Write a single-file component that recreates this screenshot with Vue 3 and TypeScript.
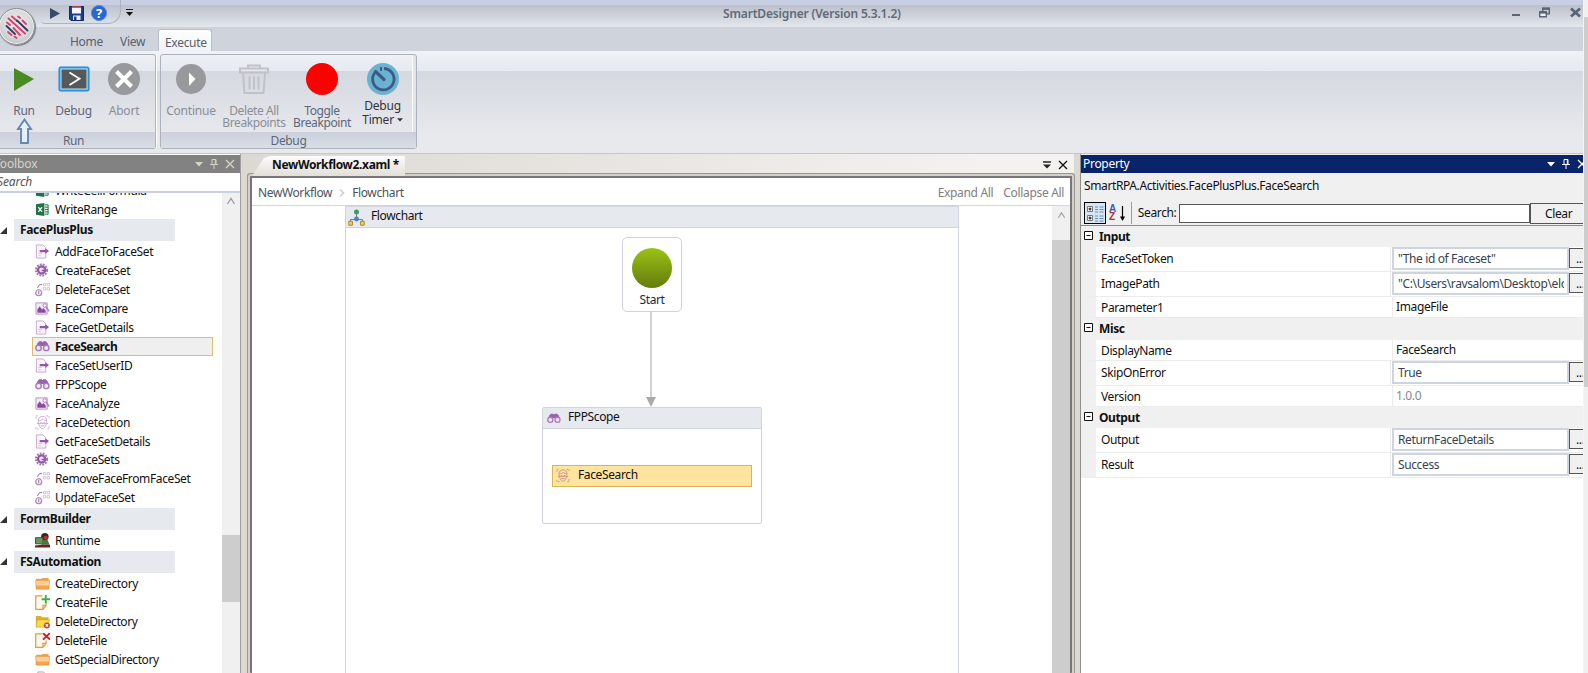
<template>
  <div class="screen">
    <!-- icônes partagées -->
    <svg class="sprite" aria-hidden="true">
      <symbol id="doc" viewBox="0 0 16 16">
        <path d="M1.500 1h7l3 3v11h-10z" fill="#fbf6fc" stroke="#c9a5d2" />
        <path d="M3.500 10h4M3.500 12.500h3" stroke="#d6bedd" />
        <path d="M5 6.500h6V4.500l4 3-4 3.200v-2H5z" fill="#9656a8" />
      </symbol>
      <symbol id="gear" viewBox="0 0 16 16">
        <circle cx="7" cy="7.500" r="6" fill="none" stroke="#a873b9" stroke-width="2" stroke-dasharray="2 1.200" />
        <circle cx="7" cy="7.500" r="3.800" fill="#eedff2" stroke="#9458a8" stroke-width="2.400" />
        <path d="M7 8h5" stroke="#9052a5" stroke-width="1.500" />
      </symbol>
      <symbol id="grid" viewBox="0 0 16 16">
        <circle cx="4" cy="11.500" r="3.200" fill="#f6eff8" stroke="#a77fb3" stroke-width="1.200" />
        <path d="M4 9.500v3.500M2.500 6.500l2-3.500 3-.5" stroke="#99699f" fill="none" />
        <path d="M9 1.500h2.500V4H9zM13 1.500h2.500V4H13zM9 6h2.500v2.500H9zM13 6h2.500v2.500H13z" fill="none" stroke="#cdbbd4" stroke-width=".9" />
      </symbol>
      <symbol id="image" viewBox="0 0 16 16">
        <path d="M1 2h12v12H1z" fill="#f4eaf7" stroke="#b890c5" />
        <path d="M2.500 12.500V9l2.500-3.500L7.500 9 9 7.500l2.500 3v2z" fill="#8a4b9f" />
        <circle cx="10.500" cy="4.800" r="1.900" fill="#fff" stroke="#a878b7" />
        <path d="M12 6.500l3 4.500" stroke="#a878b7" stroke-width="1.400" />
      </symbol>
      <symbol id="binoculars" viewBox="0 0 16 16">
        <path d="M2.500 4.500L4.500 2.500h2.500l1 1 1-1h2.500l2 2 1.500 5H9.500V7.500h-3v2H1z" fill="#9762ab" />
        <circle cx="3.800" cy="9.500" r="2.900" fill="#f1e5f4" stroke="#a97abb" stroke-width="1.500" />
        <circle cx="12" cy="9.500" r="2.900" fill="#f1e5f4" stroke="#a97abb" stroke-width="1.500" />
      </symbol>
      <symbol id="face" viewBox="0 0 16 16">
        <path d="M1 4V1h3M12 1h3v3M15 12v3h-3M4 15H1v-3" fill="none" stroke="currentColor" stroke-dasharray="2 1" />
        <path d="M3.500 6.500C3.500 3 5.500 1.500 8 1.500s4.500 1.500 4.500 5-2 8-4.500 8-4.500-4.500-4.500-8z" fill="none" stroke="currentColor" />
        <path d="M3.500 6c2.500 0 4-.5 5-2 1 1.500 2 2 4 2M2 9h12M5.500 8h1.500M9 8h1.500M6 11.500h4" fill="none" stroke="currentColor" />
      </symbol>
      <symbol id="excel" viewBox="0 0 16 16">
        <path d="M1 2.500l9-1.500v14l-9-1.500z" fill="#1f7246" />
        <path d="M3.500 5.500l4 5M7.500 5.500l-4 5" stroke="#fff" stroke-width="1.400" />
        <path d="M10.500 3h3.500v10h-3.500" fill="#e4f1e9" stroke="#1f7246" />
        <path d="M10.500 5.500H14M10.500 8H14M10.500 10.500H14" stroke="#1f7246" />
      </symbol>
      <symbol id="runtime" viewBox="0 0 16 16">
        <circle cx="10.500" cy="4" r="4" fill="#2d2a24" />
        <circle cx="11.500" cy="5" r="2.200" fill="#d22730" />
        <path d="M.5 5h8v6.500h-8z" fill="#6b9a5d" stroke="#31512f" />
        <path d="M7.500 7.500l6 0 2 5H7z" fill="#4a7642" />
        <path d="M0 15.500v-2.300l7-.7h9v3z" fill="#6c2024" />
      </symbol>
      <symbol id="folder" viewBox="0 0 16 16">
        <path d="M1 3h5.500L8 2h6.500v11H1z" fill="#e9a862" />
        <path d="M.8 4.500h14.700l-.8 9.500H1.300z" fill="#f5a54b" stroke="#dd8a37" stroke-width=".6" />
        <path d="M1.200 5h14l-.4 5H1.500z" fill="#fbcf98" />
      </symbol>
      <symbol id="folder-delete" viewBox="0 0 16 16">
        <path d="M1 2h5l1.500 1.500h7v10H1z" fill="#dcb02c" />
        <path d="M2.500 6h13l-2 8H1z" fill="#f7d94b" stroke="#c99d23" stroke-width=".6" />
        <circle cx="12.700" cy="12.200" r="3.200" fill="#c1423f" />
        <path d="M11.400 10.900l2.600 2.600M14 10.900l-2.600 2.600" stroke="#fff" stroke-width="1.100" />
      </symbol>
      <symbol id="file-add" viewBox="0 0 16 16">
        <path d="M8 1H.8v14.300h7.700l3.300-4V9M8.500 15v-4H12" fill="#fffaf0" stroke="#e79a37" stroke-width="1.300" />
        <path d="M11.500 0v9M7 4.500h9" stroke="#36b24a" stroke-width="2" />
      </symbol>
      <symbol id="file-delete" viewBox="0 0 16 16">
        <path d="M7.500 1H.8v14.300h7.700l3.300-4V8M8.500 15v-4H12" fill="#fffaf0" stroke="#e79a37" stroke-width="1.300" />
        <path d="M8.500 0l7.500 7M16 0L8.500 7" stroke="#e2131b" stroke-width="2" />
      </symbol>
      <symbol id="file" viewBox="0 0 16 16">
        <path d="M3 1h6l4 4v10H3z" fill="#f5f5f5" stroke="#aaa" />
      </symbol>
      <symbol id="pin" viewBox="0 0 10 12">
        <path d="M3 1.500h4v5H3zM1 6.500h8M5 6.500V11M6.300 1.500v5" fill="none" stroke="currentColor" />
      </symbol>
      <symbol id="cross" viewBox="0 0 10 10">
        <path d="M1 1l8 8M9 1L1 9" fill="none" stroke="currentColor" stroke-width="1.300" />
      </symbol>
      <symbol id="caret" viewBox="0 0 8 5">
        <path d="M0 0h8L4 4.500z" fill="currentColor" />
      </symbol>
      <symbol id="chevron" viewBox="0 0 10 10">
        <path d="M1.500 8L5 2.500 8.500 8" fill="none" stroke="#9d9d9d" stroke-width="1.300" />
      </symbol>
    </svg>

    <div class="app">
      <header class="titlebar">
        <div class="quick">
          <svg width="10" height="11" viewBox="0 0 10 11"><path d="M0 0l10 5.500L0 11z" fill="#3c4a6b" /></svg>
          <svg class="q-save" width="15" height="15" viewBox="0 0 15 15">
            <path d="M.5.5h14v14H2L.5 13z" fill="#1d3f87" stroke="#132a5e" />
            <path d="M3 1h9v6.500H3z" fill="#f2f5fa" /><path d="M3 0h9v1.800H3z" fill="#a4444c" />
            <path d="M4 9.500h7.500V14H4z" fill="#e8edf5" /><path d="M5 10.500h2.500V14H5z" fill="#1d3f87" />
          </svg>
          <svg class="q-help" width="16" height="16" viewBox="0 0 16 16">
            <circle cx="8" cy="8" r="7.600" fill="#2767d2" stroke="#5b8ade" />
            <text x="8" y="12.800" text-anchor="middle" fill="#fff" font-size="13" font-weight="700">?</text>
          </svg>
        </div>
        <svg class="q-more" width="7" height="8" viewBox="0 0 7 8"><path d="M0 .5h7" stroke="#222" /><path d="M0 3h7L3.500 7z" fill="#111" /></svg>
        <div class="title">SmartDesigner (Version 5.3.1.2)</div>
        <div class="win">
          <svg width="8" height="12" viewBox="0 0 8 12"><path d="M0 8h8" stroke="#5a6477" stroke-width="2" /></svg>
          <svg width="11" height="12" viewBox="0 0 11 12">
            <path d="M3.700 5V1.700h6.600v5H8" fill="none" stroke="#5a6477" stroke-width="1.400" /><path d="M3 1.500h8" stroke="#5a6477" stroke-width="2.400" />
            <path d="M.7 5h6.600v4.800H.7z" fill="#eef0f4" stroke="#5a6477" stroke-width="1.400" /><path d="M0 5.500h8" stroke="#5a6477" stroke-width="2.200" />
          </svg>
          <svg width="11" height="12" viewBox="0 0 11 12"><path d="M1 1.500l9 8M10 1.500l-9 8" stroke="#5a6477" stroke-width="2.700" /></svg>
        </div>
      </header>
      <div class="orb">
        <svg width="24" height="24" viewBox="0 0 24 24" fill="none" stroke-width="1.900" stroke-linecap="round">
          <path d="M13 1.500l2 1.500M17.500 5.500l3.500 3.500M7 1.500l5 4.500M3.500 3.500l16.500 15M2 7.500l3 2.500M8.500 13l6.500 7M3 17l3.500 3M9.500 21.500l2 1.500" stroke="#dc3f6b" />
          <path d="M12 5.500l10.500 10M1.500 11l8.500 8" stroke="#2e4159" />
        </svg>
      </div>

      <nav class="tabs">
        <span class="tab t-home">Home</span>
        <span class="tab t-view">View</span>
        <span class="tab active">Execute</span>
      </nav>

      <section class="ribbon">
        <div class="group g-run">
          <div class="buttons">
            <div class="btn" style="width: 48px">
              <svg width="32" height="32" viewBox="0 0 32 32"><path d="M6 5l20 11L6 28z" fill="#4a8a22" /></svg>
              <span>Run</span>
            </div>
            <div class="btn" style="width: 51px">
              <svg width="32" height="32" viewBox="0 0 32 32">
                <rect x="1" y="4" width="30" height="24" rx="1.500" fill="#37a0e4" stroke="#2384cc" />
                <rect x="3" y="6" width="26" height="20" fill="#56595c" stroke="#bfe3f7" />
                <path d="M11.500 9.500l10 6.300-10 6.200" fill="none" stroke="#fff" stroke-width="1.800" />
              </svg>
              <span>Debug</span>
            </div>
            <div class="btn off" style="width: 50px">
              <svg width="32" height="32" viewBox="0 0 32 32"><circle cx="16" cy="16" r="16" fill="#97999d" /><path d="M8.500 8.500l15 15M23.500 8.500l-15 15" stroke="#fff" stroke-width="4" /></svg>
              <span>Abort</span>
            </div>
          </div>
          <div class="caption">Run</div>
          <svg class="pointer" width="17" height="27" viewBox="0 0 17 27"><path d="M8.500 1.500l6.500 9.500h-3v14H5v-14H2z" fill="#e9edf4" stroke="#6488b5" stroke-width="1.900" /></svg>
        </div>
        <div class="group g-debug">
          <div class="buttons">
            <div class="btn off" style="width: 60px">
              <svg width="32" height="32" viewBox="0 0 32 32"><circle cx="16" cy="16" r="15" fill="#97999d" /><path d="M14 9.500l6.500 6.500-6.500 7z" fill="#fff" /></svg>
              <span>Continue</span>
            </div>
            <div class="btn off" style="width: 66px">
              <svg width="32" height="32" viewBox="0 0 32 32" fill="none" stroke="#c0c2c6" stroke-width="2">
                <path d="M2 5.500h28v4H2zM10 5V2.500h12V5M5 10l1.500 20h19L27 10M11.500 13.500v13M16 13.500v13M20.500 13.500v13" />
              </svg>
              <span>Delete All<br>Breakpoints</span>
            </div>
            <div class="btn" style="width: 70px">
              <svg width="32" height="32" viewBox="0 0 32 32"><circle cx="16" cy="16" r="16" fill="#fe0000" /></svg>
              <span>Toggle<br>Breakpoint</span>
            </div>
            <div class="btn timer" style="width: 51px">
              <svg width="32" height="32" viewBox="0 0 32 32" fill="none">
                <circle cx="16" cy="16" r="16" fill="#69b3d1" />
                <path d="M17 5.500a10.700 10.700 0 1 1-9 4" stroke="#3c5b84" stroke-width="2.800" />
                <path d="M8.500 8.500l8.500 8" stroke="#3c5b84" stroke-width="3.200" stroke-linecap="round" /><path d="M14 4v4" stroke="#3c5b84" stroke-width="2" />
              </svg>
              <span>Debug<br>Timer <svg class="mini" width="6" height="4"><use href="#caret" /></svg></span>
            </div>
          </div>
          <div class="caption">Debug</div>
        </div>
      </section>

      <main class="work">
        <aside class="toolbox">
          <div class="bar bar-grey">
            <span class="cut">Toolbox</span>
            <svg width="8" height="5"><use href="#caret" /></svg>
            <svg width="10" height="12"><use href="#pin" /></svg>
            <svg width="10" height="10"><use href="#cross" /></svg>
          </div>
          <div class="filter"><span>Search</span></div>
          <div class="list-wrap">
            <div class="list">
              <template v-for="g in groups" :key="g.name">
                <div v-if="g.name" class="cat">
                  <svg width="7" height="7" viewBox="0 0 7 7"><path d="M7 0v7H0z" fill="#333" /></svg>
                  <b>{{ g.name }}</b>
                </div>
                <div class="items" :class="{ first: !g.name }">
                  <div v-for="it in g.items" :key="it.label" class="item" :class="{ selected: it.label === selected }">
                    <svg width="15" height="15"><use :href="'#' + it.icon" /></svg>
                    <span>{{ it.label }}</span>
                  </div>
                </div>
              </template>
            </div>
            <div class="scroll s-left">
              <svg width="10" height="10"><use href="#chevron" /></svg>
              <i class="thumb"></i>
            </div>
          </div>
        </aside>

        <section class="editor">
          <div class="doc-tabs">
            <div class="doc-tab">NewWorkflow2.xaml *</div>
            <svg width="8" height="8" viewBox="0 0 8 8"><path d="M0 1h8" stroke="#222" stroke-width="1.500" /><path d="M0 3.500h8L4 7.500z" fill="#222" /></svg>
            <svg width="10" height="10"><use href="#cross" /></svg>
          </div>
          <div class="frame">
            <div class="crumbs">
              <span>NewWorkflow</span>
              <svg width="6" height="8" viewBox="0 0 6 8"><path d="M1 .5L4.500 4 1 7.500" fill="none" stroke="#ccd0d8" stroke-width="1.700" /></svg>
              <span>Flowchart</span>
              <span class="links"><span>Expand All</span><span>Collapse All</span></span>
            </div>
            <div class="canvas-row">
              <div class="canvas">
                <div class="flow-head">
                  <svg width="17" height="17" viewBox="0 0 17 17">
                    <path d="M8.500 4v6M2.500 12v-1.500h12V12" fill="none" stroke="#6a7ea0" />
                    <circle cx="8.500" cy="3" r="2.500" fill="#3d9b64" /><circle cx="8.500" cy="10" r="2.400" fill="#4e7fc0" />
                    <path d="M.8 12.300h3.600v3.900H.8zM12.600 12.300h3.600v3.900h-3.600z" fill="#f4d465" stroke="#a98628" />
                  </svg>
                  <span>Flowchart</span>
                </div>
                <div class="node start"><i></i>Start</div>
                <svg class="arrow" width="10" height="95" viewBox="0 0 10 95"><path d="M5 0v86" stroke="#cfd1d6" stroke-width="2" /><path d="M0 85h10L5 95z" fill="#aaa" /></svg>
                <div class="node scope">
                  <div class="scope-head">
                    <svg width="14" height="15"><use href="#binoculars" /></svg>
                    <span>FPPScope</span>
                  </div>
                  <div class="step">
                    <svg width="14" height="17" viewBox="0 0 14 17"><use href="#face" width="14" height="17" /></svg>
                    <span>FaceSearch</span>
                  </div>
                </div>
              </div>
              <div class="scroll s-mid">
                <svg width="9" height="10"><use href="#chevron" /></svg>
                <i class="thumb"></i>
              </div>
            </div>
          </div>
        </section>

        <aside class="props">
          <div class="bar bar-blue">
            <span class="cut">Property</span>
            <svg width="8" height="5"><use href="#caret" /></svg>
            <svg width="10" height="12"><use href="#pin" /></svg>
            <svg width="10" height="10"><use href="#cross" /></svg>
          </div>
          <div class="type">SmartRPA.Activities.FacePlusPlus.FaceSearch</div>
          <div class="tools">
            <span class="sort-cat">
              <svg width="17" height="17" viewBox="0 0 17 17">
                <path d="M.5 1.500h5v5h-5zM.5 10.500h5v5h-5z" fill="#fff" stroke="#777" />
                <path d="M1.500 4h3M3 2.500v3M1.500 13h3M3 11.500v3" stroke="#000" />
                <path d="M8 2h3M12.500 2h4M8 4.500h3M12.500 4.500h4M8 7h3M12.500 7h4M8 11h3M12.500 11h4M8 13.500h3M12.500 13.500h4M8 16h3M12.500 16h4" stroke="#6d8cb5" />
              </svg>
            </span>
            <span class="az"><b>A</b><b>Z</b></span>
            <svg class="down" width="5" height="15" viewBox="0 0 5 15"><path d="M2.500 0v11" stroke="#000" stroke-width="1.200" /><path d="M0 10.500h5L2.500 15z" /></svg>
            <i class="sep"></i>
            <span>Search:</span>
            <div class="search-box"></div>
            <div class="clear">Clear</div>
          </div>
          <div class="grid">
            <template v-for="s in sections" :key="s.title">
              <div class="sec">
                <svg width="9" height="9" viewBox="0 0 9 9"><path d="M.5.500h8v8h-8z" fill="#fff" stroke="#111" /><path d="M2.500 4.500h4" stroke="#111" /></svg>
                <b>{{ s.title }}</b>
              </div>
              <div v-for="r in s.rows" :key="r.name" class="row" :class="{ tall: r.editor }">
                <div class="name">{{ r.name }}</div>
                <div v-if="r.editor" class="value">
                  <div class="field"><span>{{ r.value }}</span></div>
                  <div class="more">...</div>
                </div>
                <div v-else class="value plain" :class="{ dim: r.dim }">{{ r.value }}</div>
              </div>
            </template>
          </div>
        </aside>
      </main>
    </div>
    <div class="page-scroll"><i></i></div>
  </div>
</template>

<script setup lang="ts">
import { ref } from 'vue';

interface Item {
  label: string;
  icon: string;
}
interface Group {
  name: string;
  items: Item[];
}
interface Row {
  name: string;
  value: string;
  editor?: boolean;
  dim?: boolean;
}

const selected = ref('FaceSearch');

const groups: Group[] = [
  {
    name: '',
    items: [
      { label: 'WriteCellFormula', icon: 'excel' },
      { label: 'WriteRange', icon: 'excel' },
    ],
  },
  {
    name: 'FacePlusPlus',
    items: [
      { label: 'AddFaceToFaceSet', icon: 'doc' },
      { label: 'CreateFaceSet', icon: 'gear' },
      { label: 'DeleteFaceSet', icon: 'grid' },
      { label: 'FaceCompare', icon: 'image' },
      { label: 'FaceGetDetails', icon: 'doc' },
      { label: 'FaceSearch', icon: 'binoculars' },
      { label: 'FaceSetUserID', icon: 'doc' },
      { label: 'FPPScope', icon: 'binoculars' },
      { label: 'FaceAnalyze', icon: 'image' },
      { label: 'FaceDetection', icon: 'face' },
      { label: 'GetFaceSetDetails', icon: 'doc' },
      { label: 'GetFaceSets', icon: 'gear' },
      { label: 'RemoveFaceFromFaceSet', icon: 'grid' },
      { label: 'UpdateFaceSet', icon: 'grid' },
    ],
  },
  { name: 'FormBuilder', items: [{ label: 'Runtime', icon: 'runtime' }] },
  {
    name: 'FSAutomation',
    items: [
      { label: 'CreateDirectory', icon: 'folder' },
      { label: 'CreateFile', icon: 'file-add' },
      { label: 'DeleteDirectory', icon: 'folder-delete' },
      { label: 'DeleteFile', icon: 'file-delete' },
      { label: 'GetSpecialDirectory', icon: 'folder' },
      { label: '', icon: 'file' },
    ],
  },
];

const sections: { title: string; rows: Row[] }[] = [
  {
    title: 'Input',
    rows: [
      { name: 'FaceSetToken', value: '"The id of Faceset"', editor: true },
      { name: 'ImagePath', value: '"C:\\Users\\ravsalom\\Desktop\\elon', editor: true },
      { name: 'Parameter1', value: 'ImageFile' },
    ],
  },
  {
    title: 'Misc',
    rows: [
      { name: 'DisplayName', value: 'FaceSearch' },
      { name: 'SkipOnError', value: 'True', editor: true },
      { name: 'Version', value: '1.0.0', dim: true },
    ],
  },
  {
    title: 'Output',
    rows: [
      { name: 'Output', value: 'ReturnFaceDetails', editor: true },
      { name: 'Result', value: 'Success', editor: true },
    ],
  },
];
</script>

<style>
body {
  overflow: hidden;
}
</style>

<style scoped>
.screen, .screen * {
  box-sizing: border-box;
}
.screen {
  display: flex;
  width: 1588px;
  height: 673px;
  overflow: hidden;
  font: 12px/16px "Noto Sans", "Open Sans", sans-serif;
  letter-spacing: -0.38px;
  color: #111;
  white-space: nowrap;
}
.screen svg {
  display: block;
  flex: none;
}
.screen .sprite {
  position: absolute;
  width: 0;
  height: 0;
}
.app {
  position: relative;
  display: flex;
  flex-direction: column;
  width: 1583px;
  height: 673px;
  overflow: hidden;
}
.page-scroll {
  width: 5px;
  padding-top: 17px;
  background: #f0f0f0;
  border-left: 1px solid #f4f4f4;
}
.page-scroll i {
  display: block;
  height: 370px;
  background: #cdcdcd;
}

/* barre de titre */
.titlebar {
  display: flex;
  height: 27px;
  background: linear-gradient(#c8cfe3 0 5px, #bbc0ca 5px, #e3e7ee);
}
.quick {
  display: flex;
  align-items: center;
  width: 80px;
  height: 24px;
  margin-left: 41px;
  padding: 3px 0 0 9px;
  border: 1px solid #adb2bb;
  border-width: 0 1px 1px 0;
  border-radius: 0 0 13px 4px;
}
.q-save {
  margin-left: 9px;
}
.q-help {
  margin-left: 7px;
}
.q-more {
  margin: 9px 0 0 5px;
}
.title {
  flex: 1;
  padding: 6px 0 0 590px;
  font-weight: 600;
  color: #626a79;
  letter-spacing: -0.17px;
}
.win {
  display: flex;
  gap: 19px;
  padding: 7px 2px 0 0;
}
.win svg + svg + svg {
  margin-left: 1px;
}
.orb {
  position: absolute;
  left: -2px;
  top: 8px;
  display: flex;
  align-items: center;
  justify-content: center;
  width: 37px;
  height: 37px;
  border: 1px solid #8a8e92;
  border-radius: 50%;
  background: radial-gradient(circle at 50% 40%, #ececec, #d4d7d9 55%, #aeb3b7);
  box-shadow: inset 0 0 0 1px #eceeef, 1px 1px 1px #777;
}

/* onglets et ruban */
.tabs {
  display: flex;
  height: 24px;
  background: #cfd3dc;
  color: #5a5f6a;
}
.tab {
  padding-top: 7px;
  letter-spacing: -0.3px;
}
.t-home {
  margin-left: 70px;
  width: 50px;
}
.t-view {
  width: 38px;
}
.tab.active {
  width: 54px;
  margin-top: 2px;
  padding: 5px 0 0 6px;
  background: linear-gradient(#fff, #f0f3f8);
  border: 1px solid #b9bec9;
  border-bottom: 0;
  border-radius: 3px 3px 0 0;
}
.ribbon {
  display: flex;
  gap: 4px;
  height: 103px;
  padding: 3px 0 4px;
  background: linear-gradient(#eff2f7 0, #e6eaf0 20px, #d4d8e0 20px, #e7e9ec 85px);
  border-bottom: 1px solid #c0c6d2;
}
.group {
  position: relative;
  display: flex;
  flex-direction: column;
  border: 1px solid #abb1bd;
  border-radius: 3px;
  box-shadow: 1px 0 #fff;
}
.g-run {
  width: 156px;
  border-left: 0;
  border-radius: 0 3px 3px 0;
}
.g-debug {
  width: 257px;
  box-shadow: inset -3px 0 #e1e4ea, inset -4px 0 #fff;
}
.buttons {
  display: flex;
  flex: 1;
  padding-top: 8px;
}
.btn {
  display: flex;
  flex-direction: column;
  align-items: center;
  text-align: center;
  color: #60667a;
}
.btn span {
  margin-top: 7px;
  line-height: 12px;
  letter-spacing: -0.2px;
}
.btn svg + span {
  padding-top: 3px;
}
.btn.off {
  color: #8b8e95;
}
.btn.off span, .btn:nth-child(3) span {
  letter-spacing: -0.4px;
}
.btn.off:first-child span, .g-run .btn.off span {
  letter-spacing: -0.2px;
}
.btn.timer {
  color: #33343a;
}
.timer svg + span {
  margin-top: 1px;
  line-height: 14px;
}
.timer .mini {
  display: inline-block;
  vertical-align: 2px;
}
.caption {
  height: 16px;
  line-height: 17px;
  text-align: center;
  color: #60667a;
  background: linear-gradient(#cbd0dc, #dadde5);
}
.g-run .caption {
  padding-right: 8px;
}
.pointer {
  position: absolute;
  left: 16px;
  top: 63px;
}

/* zone de travail */
.work {
  display: flex;
  flex: 1;
  min-height: 0;
  background: #dcd9d2;
}
.bar {
  display: flex;
  align-items: center;
  height: 18px;
}
.bar .cut {
  flex: 1;
}
.toolbox {
  display: flex;
  flex-direction: column;
  width: 241px;
  padding-top: 1px;
  background: #fff;
  border-right: 1px solid #a0a0a0;
}
.bar-grey {
  gap: 6px;
  padding-right: 5px;
  background: #828282;
  color: #d8d4c4;
}
.bar-grey .cut {
  margin-left: -6px;
  letter-spacing: -0.1px;
}
.filter {
  height: 20px;
  padding-top: 1px;
  border-bottom: 2px solid #c6d2e2;
  font-style: italic;
  color: #555;
}
.filter span {
  margin-left: -3px;
  letter-spacing: -0.1px;
}
.list-wrap {
  display: flex;
  flex: 1;
  min-height: 0;
}
.list {
  flex: 1;
  overflow: hidden;
}
.cat {
  display: flex;
  align-items: center;
  height: 21.500px;
}
.cat b {
  width: 161px;
  height: 21.500px;
  margin-left: 7px;
  padding-left: 6px;
  line-height: 22px;
  letter-spacing: -0.33px;
  background: #e6eaee;
}
.items {
  padding-top: 2.500px;
  padding-left: 32px;
}
.items.first {
  margin-top: -14px;
}
.item {
  display: flex;
  align-items: center;
  height: 18.930px;
  gap: 5px;
  padding-left: 2px;
  border: 1px solid transparent;
  width: 181px;
}
.items:not(.first) .item {
  position: relative;
  top: -1px;
}
.item span {
  padding-top: 1px;
}
.item.selected {
  background: #efefef;
  border-color: #dcc069;
  font-weight: 700;
  letter-spacing: -0.5px;
}
.scroll {
  display: flex;
  flex-direction: column;
  align-items: center;
  width: 17px;
  background: #f0f0f0;
}
.thumb {
  display: block;
  width: 100%;
  background: #cdcdcd;
}
.s-left {
  width: 18px;
  padding-top: 3px;
}
.s-left .thumb {
  height: 67px;
  margin-top: 329px;
}

.editor {
  display: flex;
  flex-direction: column;
  width: 833px;
  padding-left: 6px;
  background: linear-gradient(90deg, #dcd9d2, #f3f2f1 90%);
}
.doc-tabs {
  display: flex;
  align-items: center;
  height: 22px;
  gap: 7px;
  padding-right: 6px;
}
.doc-tab {
  width: 153px;
  height: 20px;
  margin: 2px auto 0 5px;
  padding: 1px 0 0 20px;
  font-weight: 700;
  letter-spacing: -0.35px;
  background: linear-gradient(#fcfcfb, #e2dfd9);
  clip-path: polygon(0 100%, 12px 10%, 18px 0, 100% 0, 100% 100%);
}
.frame {
  display: flex;
  flex-direction: column;
  flex: 1;
  min-height: 0;
  border: solid #77757a;
  border-width: 2px 2px 0 2px;
  margin-right: 2px;
  margin-left: 3px;
  box-shadow: 0 0 0 2px #d3d0ca, 0 0 0 3px #99968f;
  border-radius: 1px;
  background: #fff;
}
.crumbs {
  display: flex;
  align-items: center;
  height: 28px;
  gap: 7px;
  padding: 2px 6px 0 6px;
  border-bottom: 1px solid #d2d6df;
  color: #4b5264;
}
.links {
  display: flex;
  gap: 10px;
  margin-left: auto;
  color: #808080;
  letter-spacing: -0.33px;
}
.canvas-row {
  display: flex;
  flex: 1;
  min-height: 0;
}
.canvas {
  position: relative;
  width: 614px;
  margin-left: 93px;
  border: 1px solid #d0d5e0;
  border-bottom: 0;
}
.flow-head {
  display: flex;
  height: 21px;
  gap: 6px;
  padding: 1px 0 0 2px;
  background: #e6eaee;
  border-bottom: 1px solid #d0d5e0;
}
.flow-head svg {
  margin-top: 1px;
}
.node {
  position: absolute;
  border: 1px solid #d0d3de;
  background: #fff;
}
.start {
  left: 276px;
  top: 30px;
  width: 60px;
  height: 75px;
  padding-top: 10px;
  border-radius: 5px;
  text-align: center;
  color: #222c3f;
}
.start i {
  display: block;
  width: 40px;
  height: 40px;
  margin: 0 auto 4px;
  border-radius: 50%;
  background: linear-gradient(#9ac215, #8bad12 30%, #6d8a0d 80%, #64800b);
}
.arrow {
  position: absolute;
  left: 300px;
  top: 105px;
}
.scope {
  left: 196px;
  top: 200px;
  width: 220px;
  height: 117px;
  border-radius: 2px;
}
.scope-head {
  display: flex;
  height: 21px;
  gap: 7px;
  padding: 1px 0 0 4px;
  background: #e6eaee;
  border-bottom: 1px solid #d0d5e0;
}
.scope-head svg {
  margin-top: 2px;
}
.step {
  display: flex;
  width: 200px;
  height: 22px;
  margin: 36px auto 0;
  gap: 8px;
  padding: 1px 0 0 3px;
  background: #ffe4a0;
  border: 1px solid #d6b656;
}
.step svg {
  color: #c98c8a;
}
.item svg {
  color: #c7a9cc;
}
.s-mid {
  width: 18px;
  margin-left: auto;
  padding-top: 4px;
}
.s-mid .thumb {
  flex: 1;
  margin-top: 20px;
}

/* panneau des propriétés */
.props {
  display: flex;
  flex-direction: column;
  flex: 1;
  margin-left: 6px;
  border-left: 1px solid #8f8f8f;
  background: #f0f0f0;
  overflow: hidden;
}
.props .bar {
  margin-top: 1px;
}
.bar-blue {
  gap: 6px;
  margin-right: -4px;
  padding-left: 2px;
  background: #0a246a;
  color: #fff;
}
.bar-blue .cut {
  letter-spacing: -0.3px;
}
.type {
  height: 28px;
  padding: 5px 0 0 3px;
}
.tools {
  display: flex;
  align-items: center;
  height: 25px;
  border-bottom: 1px solid #8c8c8c;
  padding-left: 3px;
}
.sort-cat {
  width: 22px;
  height: 22px;
  padding: 2px;
  border: 1px solid #000;
  background: #d5e5f3;
}
.az {
  display: flex;
  flex-direction: column;
  margin-left: 3px;
  font: 10px/8px "Liberation Sans", sans-serif;
  color: #3460b0;
}
.az b + b {
  color: #a83238;
}
.down {
  margin: 0 6px 0 4px;
}
.sep {
  width: 1px;
  height: 22px;
  margin-right: 6px;
  background: #999;
}
.search-box {
  flex: 1;
  height: 19px;
  margin-left: 3px;
  background: #fff;
  border: 1px solid #555;
}
.clear {
  width: 53px;
  height: 21px;
  padding: 2px 0 0 14px;
  border: 1px solid #555;
  border-right: 0;
}
.grid {
  flex: 1;
  background: #fff;
}
.sec {
  display: flex;
  height: 21.300px;
  gap: 7px;
  padding: 3px 0 0 3px;
  background: #f0f0f0;
}
.sec svg {
  margin-top: 2px;
}
.sec b {
  margin-left: -1px;
}
.row {
  display: flex;
  height: 21px;
  border-left: 15px solid #f0f0f0;
  border-bottom: 1px solid #ececec;
}
.row.tall {
  height: 25px;
}
.name {
  width: 297px;
  padding: 3px 0 0 5px;
  border-right: 1px solid #ececec;
}
.tall .name {
  padding-top: 4px;
}
.value {
  display: flex;
  flex: 1;
}
.plain {
  padding: 2px 0 0 3px;
}
.dim {
  color: #888;
}
.field {
  width: 177px;
  height: 23px;
  margin-left: 1px;
  padding: 2px 3px 0 4px;
  border: 2px solid #cfd5e0;
  overflow: hidden;
  color: #3a3f50;
}
.field span {
  display: block;
  overflow: hidden;
}
.more {
  width: 30px;
  height: 20px;
  margin: 1px -16px 0 0;
  padding: 2px 0 0 6px;
  border: 1px solid #555;
  background: #f0f0f0;
}
</style>
